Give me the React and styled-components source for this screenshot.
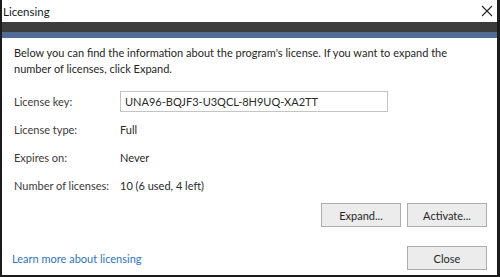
import React from "react";
import styled, { createGlobalStyle } from "styled-components";

const Global = createGlobalStyle`
  html, body { margin: 0; padding: 0; background: #ffffff; }
  * { box-sizing: border-box; }
`;

const Window = styled.div`
  width: 500px;
  height: 277px;
  background: #ffffff;
  border-left: 2px solid #1c1c1c;
  border-right: 3px solid #1c1c1c;
  border-bottom: 2px solid #1c1c1c;
  font-family: "Lato", "Noto Sans", sans-serif;
  font-size: 11px;
  color: #262626;
  display: flex;
  flex-direction: column;
`;

const TitleBar = styled.div`
  height: 22px;
  display: flex;
  align-items: center;
  justify-content: space-between;
  padding: 0 4px 0 1px;
`;

const Title = styled.span`
  font-size: 11.5px;
  color: #1a1a1a;
`;

const CloseGlyph = styled.svg`
  width: 12px;
  height: 12px;
  display: block;
`;

const Band = styled.div`
  height: ${(p) => p.$h}px;
  background: ${(p) => p.$c};
`;

const Body = styled.div`
  flex: 1;
  display: flex;
  flex-direction: column;
  padding: 7px 10px 0 10px;
`;

const Intro = styled.p`
  margin: 0;
  line-height: 16px;
  padding-left: 2px;
  padding-right: 10px;
`;

const Fields = styled.div`
  margin-top: 10px;
  padding-left: 2px;
  display: grid;
  grid-template-columns: 106px 1fr;
  grid-auto-rows: 28px;
  align-items: center;
  white-space: nowrap;
`;

const Label = styled.span`
  color: #3a3a3a;
`;

const Value = styled.span`
  color: #2a2a2a;
`;

const KeyInput = styled.div`
  width: 268px;
  height: 21px;
  border: 1px solid #c4c4c4;
  padding: 0 0 0 4px;
  display: flex;
  align-items: center;
  color: #2a2a2a;
`;

const ButtonRow = styled.div`
  display: flex;
  justify-content: ${(p) => (p.$between ? "space-between" : "flex-end")};
  align-items: center;
  gap: 6px;
  margin-top: ${(p) => p.$mt}px;
`;

const Button = styled.button`
  width: 80px;
  height: 24px;
  background: #ececec;
  border: 1px solid #adadad;
  font-family: inherit;
  font-size: 11px;
  color: #262626;
  padding: 0;
`;

const Link = styled.a`
  color: #2f74c0;
  text-decoration: none;
  cursor: pointer;
`;

export default function App() {
  return (
    <>
      <Global />
      <Window>
        <TitleBar>
          <Title>Licensing</Title>
          <CloseGlyph viewBox="0 0 12 12">
            <path d="M1 1 L11 11 M11 1 L1 11" stroke="#222" strokeWidth="1.1" fill="none" />
          </CloseGlyph>
        </TitleBar>
        <Band $h={10} $c="#3c3c3c" />
        <Band $h={6} $c="#506c97" />
        <Body>
          <Intro>
            Below you can find the information about the program's license. If you want to expand the
            number of licenses, click Expand.
          </Intro>
          <Fields>
            <Label>License key:</Label>
            <KeyInput>UNA96-BQJF3-U3QCL-8H9UQ-XA2TT</KeyInput>
            <Label>License type:</Label>
            <Value>Full</Value>
            <Label>Expires on:</Label>
            <Value>Never</Value>
            <Label>Number of licenses:</Label>
            <Value>10 (6 used, 4 left)</Value>
          </Fields>
          <ButtonRow $mt={4}>
            <Button>Expand...</Button>
            <Button>Activate...</Button>
          </ButtonRow>
          <ButtonRow $mt={19} $between>
            <Link>Learn more about licensing</Link>
            <Button>Close</Button>
          </ButtonRow>
        </Body>
      </Window>
    </>
  );
}
